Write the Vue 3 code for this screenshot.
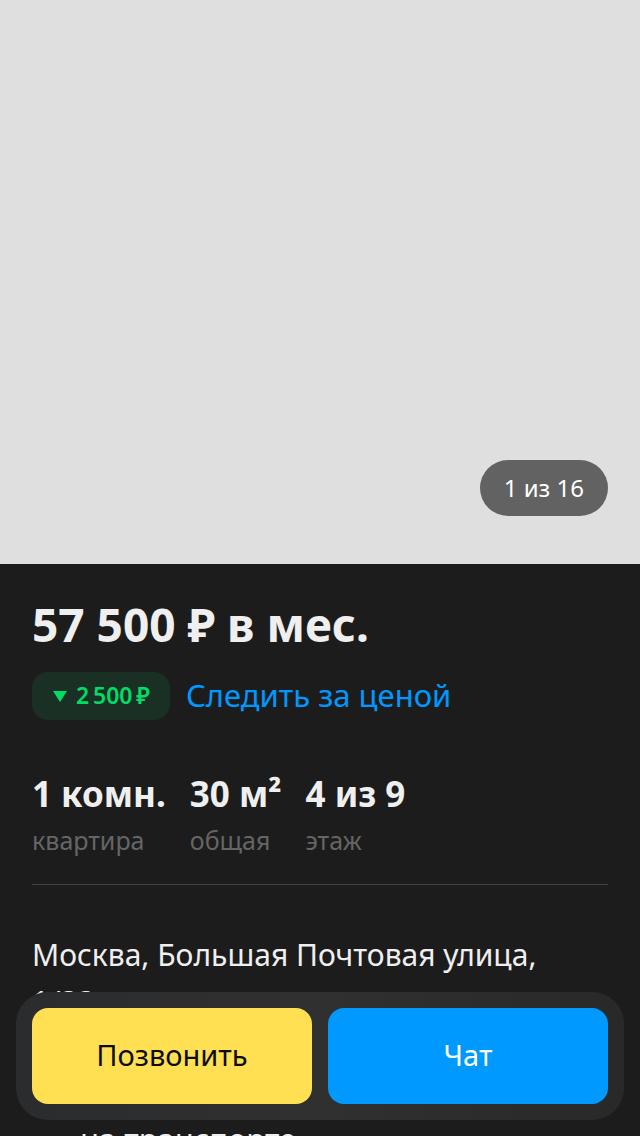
<template>
  <main class="page">
    <section class="gallery" aria-label="Фотографии">
      <span class="counter">1 из 16</span>
    </section>
    <section class="details">
      <h1>57 500 ₽ в мес.</h1>
      <div class="price-row">
        <span class="drop">
          <svg width="14" height="12" viewBox="0 0 14 12" aria-hidden="true"><path d="M0 1h14L7 12z" /></svg>
          <span>2&#8201;500&#8201;₽</span>
        </span>
        <a href="#watch">Следить за ценой</a>
      </div>
      <dl class="facts">
        <div v-for="f in facts" :key="f.label"><dt>{{ f.label }}</dt><dd>{{ f.value }}</dd></div>
      </dl>
      <p class="address">Москва, Большая Почтовая улица,<br>1/33</p>
      <p class="route">на транспорте</p>
    </section>
    <div class="actions">
      <button class="call" type="button">Позвонить</button>
      <button class="chat" type="button">Чат</button>
    </div>
  </main>
</template>

<script setup>
const facts = [
  { value: '1 комн.', label: 'квартира' },
  { value: '30 м²', label: 'общая' },
  { value: '4 из 9', label: 'этаж' },
]
</script>

<style>
body { background: #1c1c1c; }
html, body, #app { height: 100%; }
</style>

<style scoped>
* { box-sizing: border-box; }
.page { position: relative; height: 100%; overflow: hidden; background: #1c1c1c; color: #efefef; font-family: "Noto Sans", "Open Sans", sans-serif; }
.gallery { display: flex; justify-content: flex-end; align-items: flex-end; height: 564px; padding: 48px 32px; background: #dfdfdf; }
.counter { padding: 0 24px; border-radius: 28px; background: #626262; color: #fff; font-size: 24px; line-height: 56px; }
.details { padding: 28px 32px 0; }
h1, p, dl, dd { margin: 0; }
h1 { font-size: 46px; line-height: 64px; font-weight: 700; }
.price-row { display: flex; align-items: center; gap: 16px; margin-top: 16px; }
.drop { display: flex; align-items: center; gap: 9px; height: 48px; padding: 0 20px 0 21px; border-radius: 16px; background: #1a3024; color: #00dc64; font-size: 23px; line-height: 46px; font-weight: 600; white-space: nowrap; }
.drop svg { fill: currentColor; }
.drop span { padding-bottom: 2px; }
a { color: #0098ff; font-size: 31px; line-height: 46px; padding-bottom: 2px; text-decoration: none; }
.facts { display: flex; gap: 24px; padding: 48px 0 26px; border-bottom: 1px solid #444; }
.facts div { display: flex; flex-direction: column-reverse; }
dt { color: #656565; font-size: 25px; line-height: 36px; margin-top: 2px; }
dd { font-size: 35px; line-height: 52px; font-weight: 700; }
.address { margin-top: 46px; font-size: 30px; line-height: 47px; }
.route { margin-top: 90px; padding-left: 48px; font-size: 31px; line-height: 48px; }
.actions { position: absolute; right: 16px; bottom: 16px; left: 16px; display: flex; gap: 16px; padding: 16px; border-radius: 32px; background: linear-gradient(90deg, #2b2c2e, #303030 50%, #292929); }
button { flex: 1; height: 96px; padding: 0 0 3px; border: 0; border-radius: 16px; font-family: inherit; font-size: 29px; }
.call { background: #ffe052; color: #0d0d0d; }
.chat { background: #0099ff; color: #fff; }
</style>
